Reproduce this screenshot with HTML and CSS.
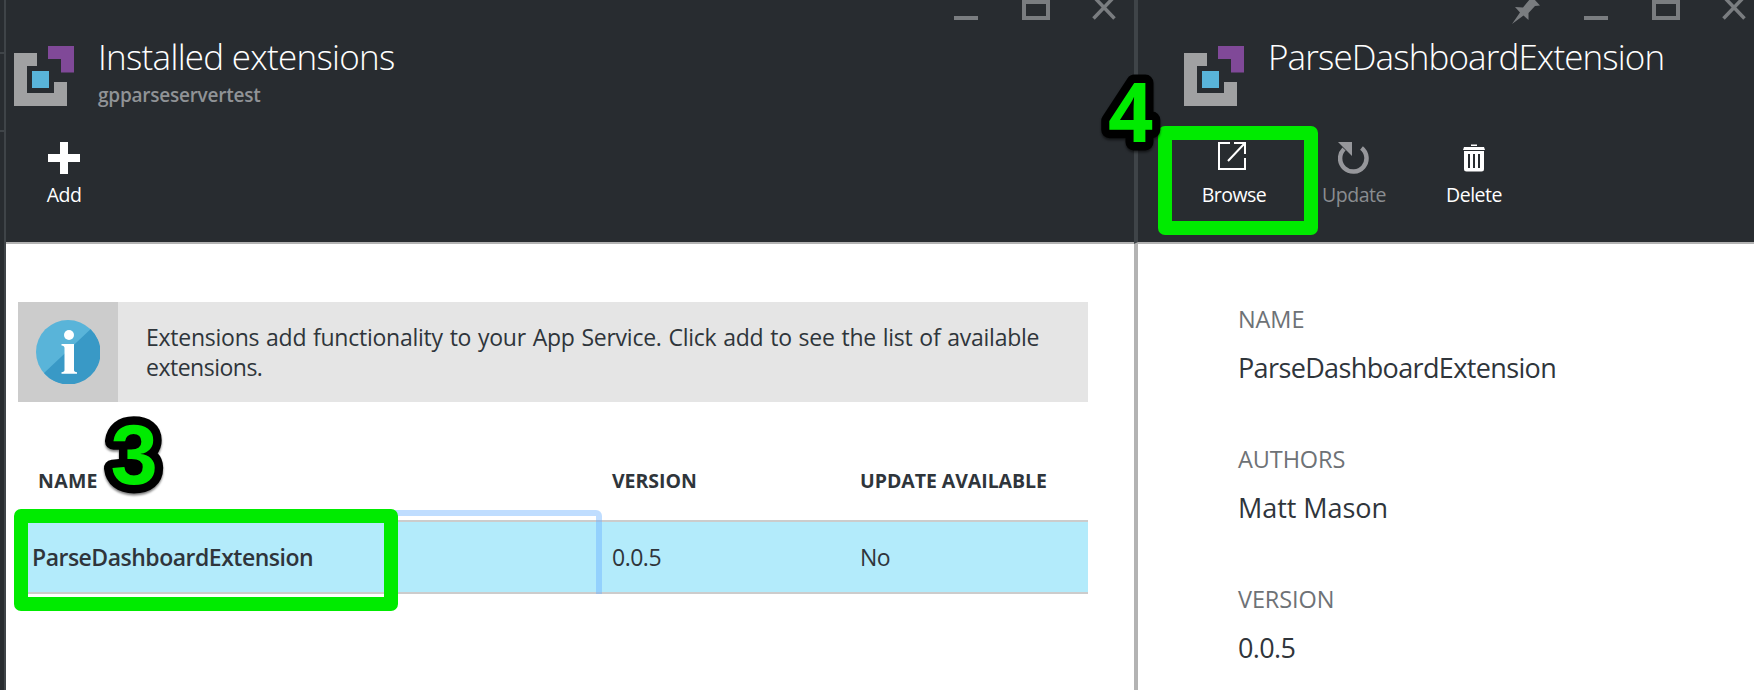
FILE: index.html
```html
<!DOCTYPE html>
<html lang="en">
<head>
<meta charset="utf-8">
<title>Installed extensions</title>
<link rel="stylesheet" href="styles.css">
</head>
<body>
<div class="portal">
  <div class="edge"><div class="edge-a"></div><div class="edge-b"></div></div>

  <section class="blade blade-list">
    <header class="head">
      <div class="controls">
        <svg width="24" height="24"><path d="M0 18H24" class="line"/></svg>
        <svg class="gap-a" width="28" height="24"><path d="M2 2H26V18H2Z" class="line"/></svg>
        <svg class="gap-b" width="24" height="24"><path d="M1.500-3.500L22.500 18.500M22.500-3.500L1.500 18.500" class="cross"/></svg>
      </div>
      <div class="heading">
        <svg class="logo" width="60" height="60"><path fill="#a0a1a2" d="M0 7H23V20H13V47H40V36H53V60H0Z"/><path fill="#804998" d="M34 0H60V26.500H47V13H34Z"/><path fill="#59b4d9" d="M18 25H35V42H18Z"/></svg>
        <div>
          <h1 class="title">Installed extensions</h1>
          <p class="subtitle">gpparseservertest</p>
        </div>
      </div>
      <div class="toolbar">
        <div class="tool"><svg width="32" height="32"><path fill="#fff" d="M12 0H20V12H32V20H20V32H12V20H0V12H12Z"/></svg><span>Add</span></div>
      </div>
    </header>
    <main class="list-body">
      <div class="info">
        <div class="info-icon"><svg width="64" height="64"><circle cx="32" cy="32" r="32" fill="#59b4d9"/><path fill="#3999c6" d="M54.500 9.200A32 32 0 1 1 8 53Z"/><circle cx="33" cy="15" r="5" fill="#fff"/><path fill="#fff" d="M25.500 24H38V50Q38 52 41 52.300V53.700H25.500V52.300Q28.500 52 28.500 50V28Q28.500 25.600 25.500 25.400Z"/></svg></div>
        <p class="info-text">Extensions add functionality to your App Service. Click add to see the list of available<br><span class="info-rest">extensions.</span></p>
      </div>
      <div class="row row-head">
        <div class="cell first">NAME</div>
        <div class="cell">VERSION</div>
        <div class="cell">UPDATE AVAILABLE</div>
      </div>
      <div class="row row-item">
        <div class="cell first">ParseDashboardExtension</div>
        <div class="cell">0.0.5</div>
        <div class="cell">No</div>
      </div>
    </main>
  </section>

  <section class="blade blade-detail">
    <header class="head">
      <div class="controls">
        <svg width="28" height="24"><path fill="#7a7d80" d="M18-1H22L28 5.500L23 6L16.500 13L16.500 20L11.500 15.500L0 24L8 12.500L3 7L11 7.500Z"/></svg>
        <svg class="gap-a" width="24" height="24"><path d="M0 18H24" class="line"/></svg>
        <svg class="gap-a" width="28" height="24"><path d="M2 2H26V18H2Z" class="line"/></svg>
        <svg class="gap-b" width="24" height="24"><path d="M1.500-3.500L22.500 18.500M22.500-3.500L1.500 18.500" class="cross"/></svg>
      </div>
      <div class="heading">
        <svg class="logo" width="60" height="60"><path fill="#a0a1a2" d="M0 7H23V20H13V47H40V36H53V60H0Z"/><path fill="#804998" d="M34 0H60V26.500H47V13H34Z"/><path fill="#59b4d9" d="M18 25H35V42H18Z"/></svg>
        <h1 class="title">ParseDashboardExtension</h1>
      </div>
      <div class="toolbar">
        <div class="tool"><svg width="32" height="32"><path fill="none" stroke="#fff" stroke-width="2" d="M12 1H1V27H27V16M16 1H27V12M27 1L10 19"/></svg><span>Browse</span></div>
        <div class="tool off"><svg width="32" height="32"><path fill="none" stroke="#96979b" stroke-width="4.500" d="M23.500 6A13.200 13.200 0 1 1 6 7"/><path fill="#96979b" d="M0 0H14V14Z"/></svg><span>Update</span></div>
        <div class="tool"><svg width="22" height="32"><path fill="#fff" d="M8 2.500H14V4H8ZM1 5H21L22 8H0ZM1 9H21V27Q21 29.500 18.500 29.500H3.500Q1 29.500 1 27Z"/><path stroke="#282c30" stroke-width="2" d="M6 12V26M11 12V26M16 12V26"/></svg><span>Delete</span></div>
      </div>
    </header>
    <dl class="props">
      <dt>NAME</dt><dd>ParseDashboardExtension</dd>
      <dt>AUTHORS</dt><dd class="loose">Matt Mason</dd>
      <dt>VERSION</dt><dd>0.0.5</dd>
    </dl>
  </section>

  <div class="mark mark-item"></div>
  <div class="mark mark-browse"></div>
  <svg class="steps" width="1754" height="690"><text class="step step-three" x="110.500" y="484">3</text><text class="step step-four" x="1108" y="141.500" textLength="45.500" lengthAdjust="spacingAndGlyphs">4</text></svg>
</div>
</body>
</html>
```
FILE: styles.css
```css
* { box-sizing: border-box; margin: 0; padding: 0; }
body { width: 1754px; height: 690px; overflow: hidden; background: #fff; color: #2f353b; font-family: "Open Sans", "Noto Sans", sans-serif; }
svg { display: block; flex: none; }
.portal { position: relative; display: flex; width: 1754px; height: 690px; overflow: hidden; }
.edge { width: 6px; background: #282c30; border-right: 2px solid #3f4448; }
.edge-a { height: 54px; border-bottom: 2px solid #3f4448; }
.edge-b { height: 78px; border-bottom: 2px solid #3f4448; }
.blade-list { width: 1128px; }
.blade-detail { width: 620px; border-left: 4px solid #b3b3b3; }
.head { height: 244px; background: #282c30; border-bottom: 2px solid #b3b3b3; }
.blade-detail .head { margin-left: -4px; border-left: 4px solid #3f4448; }
.controls { display: flex; justify-content: flex-end; height: 24px; padding-right: 18px; }
.blade-detail .controls { padding-right: 8px; }
.gap-a { margin-left: 44px; }
.gap-b { margin-left: 42px; }
.line { fill: none; stroke: #7a7d80; stroke-width: 4; }
.cross { fill: none; stroke: #7a7d80; stroke-width: 3.500; }
.heading { display: flex; gap: 24px; height: 118px; padding: 8px 0 0 8px; }
.blade-detail .heading { padding-left: 46px; }
.logo { margin-top: 14px; }
.title { height: 50px; color: #fff; font-size: 35px; font-weight: 300; line-height: 50px; letter-spacing: -.72px; white-space: nowrap; }
.blade-detail .title { letter-spacing: -.88px; }
.subtitle { color: #909396; font-size: 19px; font-weight: 600; line-height: 26px; letter-spacing: -.24px; }
.toolbar { display: flex; }
.blade-detail .toolbar { padding-left: 36px; }
.tool { display: flex; flex-direction: column; align-items: center; gap: 9px; width: 120px; color: #fff; font-size: 19.500px; line-height: 24px; letter-spacing: -.5px; }
.blade-list .tool { width: 116px; }
.off { color: #8a8d90; }
.list-body { padding: 58px 46px 0 12px; }
.info { display: flex; height: 100px; background: #e5e5e5; }
.info-icon { display: flex; align-items: center; justify-content: center; width: 100px; background: #ccc; }
.info-text { padding: 20px 0 0 28px; font-size: 23px; line-height: 30px; letter-spacing: -.25px; word-spacing: 1.1px; white-space: nowrap; }
.info-rest { letter-spacing: -.5px; }
.row { display: grid; grid-template-columns: 584px 248px 1fr; }
.row-head { height: 118px; padding-top: 66px; font-size: 19.500px; font-weight: 700; line-height: 26px; letter-spacing: -.05px; }
.row-item { height: 74px; background: #b3ebfb; border: solid #ccc; border-width: 2px 0; font-size: 23px; line-height: 70px; letter-spacing: -.5px; }
.cell { padding-left: 10px; }
.row-head .first { padding-left: 20px; letter-spacing: .3px; }
.row-item .first { position: relative; padding-left: 14px; font-weight: 600; }
.row-item .first::after { content: ""; position: absolute; inset: -12px 0 -2px 0; border: 6px solid rgba(102, 175, 255, .42); border-bottom: 0; border-left: 0; border-radius: 0 6px 0 0; }
.props { padding: 59px 0 0 100px; }
.props dt { height: 36px; color: #6e7276; font-size: 23.500px; line-height: 32px; letter-spacing: -.1px; }
.props dd { height: 104px; font-size: 27px; line-height: 36px; letter-spacing: -.63px; padding-top: 11px; }
.props .loose { letter-spacing: -.05px; }
.mark { position: absolute; border: 14px solid #00eb00; border-radius: 7px; }
.mark-item { left: 14px; top: 509px; width: 384px; height: 102px; }
.mark-browse { left: 1158px; top: 126px; width: 160px; height: 109px; }
.steps { position: absolute; left: 0; top: 0; }
.step { fill: #00eb00; stroke: #000; stroke-width: 17px; stroke-linejoin: round; paint-order: stroke; filter: drop-shadow(0 2px 1px rgba(0, 0, 0, .5)); }
.step-three { font: bold 85px "Liberation Sans", sans-serif; }
.step-four { font: bold 83px "Open Sans", sans-serif; }
```
